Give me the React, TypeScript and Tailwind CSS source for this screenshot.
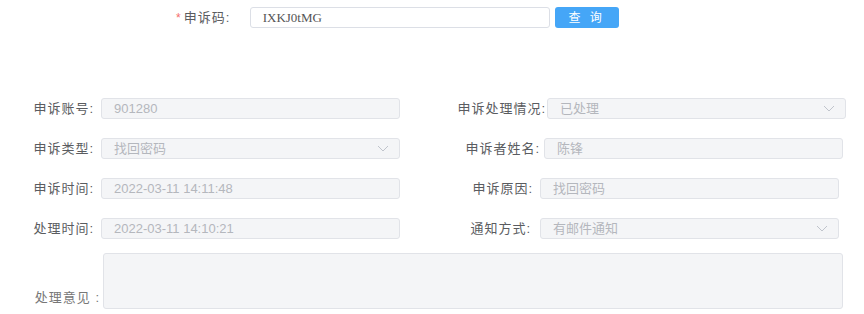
import React from "react";

const font = "font-['Liberation_Sans','Noto_Sans_CJK_SC',sans-serif]";

function Chevron() {
  return (
    <svg width="12" height="7" viewBox="0 0 12 7" fill="none" className="shrink-0">
      <path d="M1 1l5 5 5-5" stroke="#c0c4cc" strokeWidth="1" />
    </svg>
  );
}

function Field({ value, select, width = "w-[299px]" }: { value: string; select?: boolean; width?: string }) {
  return (
    <div
      className={`${width} h-[21px] flex items-center justify-between rounded-[3px] border border-[#e1e3e8] bg-[#f4f5f7] pl-[12px] pr-[10px] text-[13px] text-[#b4b7bd]`}
    >
      <span>{value}</span>
      {select && <Chevron />}
    </div>
  );
}

function Row({
  label,
  labelW,
  gap,
  value,
  select,
}: {
  label: string;
  labelW: string;
  gap: string;
  value: string;
  select?: boolean;
}) {
  return (
    <div className="flex items-center">
      <div className={`${labelW} ${gap} text-right text-[13px] tracking-[1px] text-[#5a5c60]`}>{label}</div>
      <Field value={value} select={select} />
    </div>
  );
}

export default function App() {
  return (
    <div className={`w-[864px] h-[314px] bg-white overflow-hidden ${font}`}>
      {/* search bar */}
      <div className="flex items-center pt-[7px] pl-[176px]">
        <span className="text-[12px] text-[#f56c6c] mr-[3px]">*</span>
        <span className="text-[13px] tracking-[1px] text-[#5a5c60] w-[66px]">申诉码:</span>
        <div className="w-[300px] h-[21px] flex items-center rounded-[3px] border border-[#dcdfe6] bg-white pl-[12px] text-[13px] text-[#555] font-['Liberation_Serif',serif]">
          IXKJ0tMG
        </div>
        <button className="ml-[5px] w-[64px] h-[21px] rounded-[3px] bg-[#45a6f7] text-white text-[12px] tracking-[3px]">
          查 询
        </button>
      </div>

      {/* details */}
      <div className="mt-[70px] flex flex-col gap-[19px]">
        <div className="flex">
          <div className="w-[420px]">
            <Row label="申诉账号:" labelW="w-[101px]" gap="pr-[7px]" value="901280" />
          </div>
          <Row label="申诉处理情况:" labelW="w-[127px]" gap="pr-[1px]" value="已处理" select />
        </div>
        <div className="flex">
          <div className="w-[420px]">
            <Row label="申诉类型:" labelW="w-[101px]" gap="pr-[7px]" value="找回密码" select />
          </div>
          <Row label="申诉者姓名:" labelW="w-[124px]" gap="pr-[4px]" value="陈锋" />
        </div>
        <div className="flex">
          <div className="w-[420px]">
            <Row label="申诉时间:" labelW="w-[101px]" gap="pr-[7px]" value="2022-03-11 14:11:48" />
          </div>
          <Row label="申诉原因:" labelW="w-[120px]" gap="pr-[7px]" value="找回密码" />
        </div>
        <div className="flex">
          <div className="w-[420px]">
            <Row label="处理时间:" labelW="w-[101px]" gap="pr-[7px]" value="2022-03-11 14:10:21" />
          </div>
          <Row label="通知方式:" labelW="w-[120px]" gap="pr-[9px]" value="有邮件通知" select />
        </div>
      </div>

      {/* remarks */}
      <div className="mt-[14px] flex items-end">
        <div className="w-[103px] pr-[3px] pb-[2px] text-right text-[13px] tracking-[1px] text-[#777]">处理意见 :</div>
        <div className="w-[740px] h-[56px] rounded-[3px] border border-[#e1e3e8] bg-[#f4f5f7]" />
      </div>
    </div>
  );
}
